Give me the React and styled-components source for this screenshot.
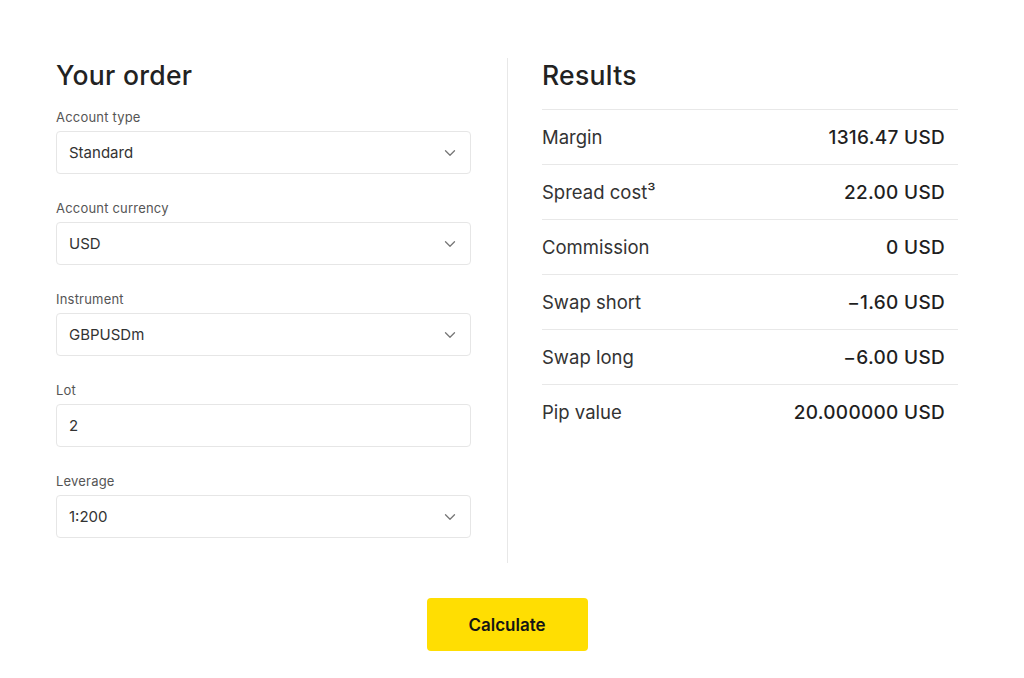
import React from "react";
import styled, { createGlobalStyle } from "styled-components";

const GlobalStyle = createGlobalStyle`
  body {
    margin: 0;
    background: #ffffff;
    font-family: Inter, "Noto Sans", Arial, sans-serif;
    color: #1f1f1f;
  }
`;

const Page = styled.div`
  width: 902px;
  padding: 58px 0 0 56px;
  display: flex;
  flex-direction: column;
  align-items: center;
`;

const Columns = styled.div`
  display: flex;
  width: 902px;
  height: 505px;
`;

const OrderColumn = styled.div`
  width: 415px;
  padding-right: 36px;
  border-right: 1px solid #e8e8e8;
`;

const ResultsColumn = styled.div`
  width: 416px;
  padding-left: 34px;
`;

const Title = styled.h2`
  margin: 0;
  font-size: 26.5px;
  line-height: 34px;
  font-weight: 500;
  color: #222;
  letter-spacing: 0.3px;
`;

const Fields = styled.div`
  margin-top: 17px;
  display: flex;
  flex-direction: column;
  gap: 26px;
`;

const Field = styled.div`
  display: flex;
  flex-direction: column;
  gap: 6px;
`;

const Label = styled.label`
  font-size: 13px;
  line-height: 16px;
  letter-spacing: 0.2px;
  color: #555;
`;

const Box = styled.div`
  height: 41px;
  border: 1px solid #e6e6e6;
  border-radius: 4px;
  display: flex;
  align-items: center;
  justify-content: space-between;
  padding: 0 14px 0 12px;
  font-size: 15px;
  color: #333;
`;

const Chevron = () => (
  <svg width="12" height="8" viewBox="0 0 12 8" fill="none">
    <path d="M1.5 1.8 6 6.2l4.5-4.4" stroke="#777" strokeWidth="1.3" strokeLinecap="round" strokeLinejoin="round" />
  </svg>
);

const Table = styled.div`
  margin-top: 17px;
`;

const Row = styled.div`
  height: 54px;
  border-top: 1px solid #e8e8e8;
  display: flex;
  align-items: center;
  justify-content: space-between;
  padding-right: 13px;
  font-size: 18.5px;
`;

const RowLabel = styled.span`
  color: #333;
`;

const RowValue = styled.span`
  font-size: 19px;
  font-weight: 500;
  letter-spacing: 0.3px;
  color: #1f1f1f;
`;

const CalcButton = styled.button`
  margin-top: 35px;
  width: 161px;
  height: 53px;
  border: none;
  border-radius: 4px;
  background: #ffde02;
  font-family: inherit;
  font-size: 17px;
  font-weight: 600;
  color: #141414;
  cursor: pointer;
`;

const fields = [
  { label: "Account type", value: "Standard", select: true },
  { label: "Account currency", value: "USD", select: true },
  { label: "Instrument", value: "GBPUSDm", select: true },
  { label: "Lot", value: "2", select: false },
  { label: "Leverage", value: "1:200", select: true },
];

const results = [
  ["Margin", "1316.47 USD"],
  ["Spread cost³", "22.00 USD"],
  ["Commission", "0 USD"],
  ["Swap short", "−1.60 USD"],
  ["Swap long", "−6.00 USD"],
  ["Pip value", "20.000000 USD"],
];

export default function App() {
  return (
    <Page>
      <GlobalStyle />
      <Columns>
        <OrderColumn>
          <Title>Your order</Title>
          <Fields>
            {fields.map((f) => (
              <Field key={f.label}>
                <Label>{f.label}</Label>
                <Box>
                  <span>{f.value}</span>
                  {f.select && <Chevron />}
                </Box>
              </Field>
            ))}
          </Fields>
        </OrderColumn>
        <ResultsColumn>
          <Title>Results</Title>
          <Table>
            {results.map(([k, v]) => (
              <Row key={k}>
                <RowLabel>{k}</RowLabel>
                <RowValue>{v}</RowValue>
              </Row>
            ))}
          </Table>
        </ResultsColumn>
      </Columns>
      <CalcButton>Calculate</CalcButton>
    </Page>
  );
}
